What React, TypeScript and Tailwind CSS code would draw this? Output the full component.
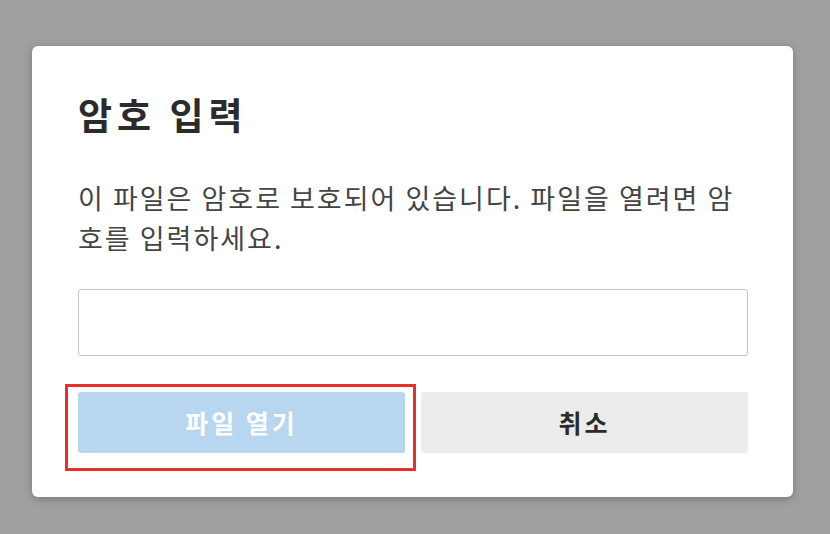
import React from "react";

export default function App() {
  return (
    <div
      className="w-[830px] h-[534px] bg-[#a0a0a0] pt-[46px] pl-[32px]"
      style={{ fontFamily: '"Noto Sans CJK KR", "Noto Sans", sans-serif' }}
    >
      <div className="relative w-[761px] h-[451px] bg-white rounded-[6px] shadow-[0_2px_8px_rgba(0,0,0,0.25)] pl-[46px] pr-[45px] pt-[43px] flex flex-col">
        <h1 className="text-[37px] leading-[50px] font-bold text-[#2b2b2b] tracking-[5px]">암호 입력</h1>
        <p className="mt-[39px] text-[27px] leading-[40px] text-[#444444] tracking-[2px] break-all">
          이 파일은 암호로 보호되어 있습니다. 파일을 열려면 암호를 입력하세요.
        </p>
        <input
          type="password"
          className="mt-[31px] w-full h-[67px] border border-[#c6c6c6] rounded-[3px] bg-white outline-none"
        />
        <div className="mt-[36px] flex gap-[16px]">
          <button className="flex-1 h-[61px] rounded-[3px] bg-[#b8d6ef] text-white text-[25px] font-bold tracking-[3px]">
            파일 열기
          </button>
          <button className="flex-1 h-[61px] rounded-[3px] bg-[#ececec] text-[#2b2b2b] text-[25px] font-bold tracking-[3px]">
            취소
          </button>
        </div>
        <div className="absolute left-[33px] top-[338px] w-[351px] h-[87px] border-[3px] border-[#e8302a] pointer-events-none" />
      </div>
    </div>
  );
}
